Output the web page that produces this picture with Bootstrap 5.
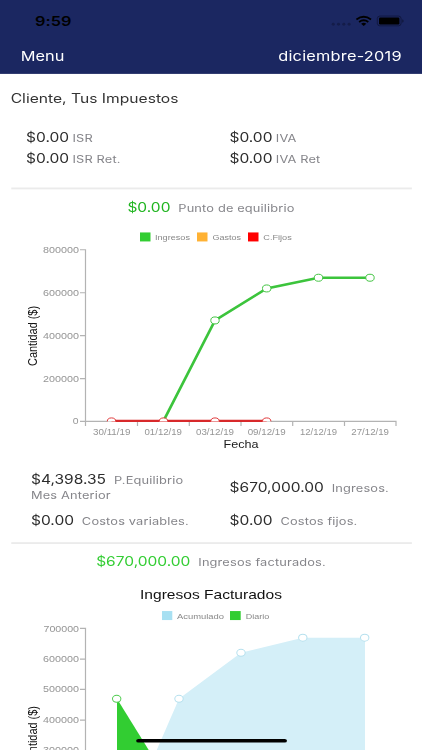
<!DOCTYPE html>
<html lang="es">
<head>
<meta charset="utf-8">
<meta name="viewport" content="width=device-width, initial-scale=1">
<title>Impuestos</title>
<link href="https://cdn.jsdelivr.net/npm/bootstrap@5.3.0/dist/css/bootstrap.min.css" rel="stylesheet">
<style>
html, body { width: 422px; height: 750px; overflow: hidden; background: #fff; }
/* 375x812 phone layout fitted to the window */
.phone { width: 375px; height: 812px; transform-origin: 0 0; transform: scale(1.12533, .92365); font-family: Inter, "Liberation Sans", sans-serif; color: #333; overflow: hidden; }
.topbar { background: #1b2761; height: 80px; }
.statusbar { height: 44px; padding: 2px 16.5px 0 31px; color: #000; }
.clock { font-size: 14.5px; font-weight: 600; letter-spacing: .1px; }
.navline { height: 32px; padding: 1px 18px 0 18.5px; color: #fff; font-size: 14.5px; }
.month { letter-spacing: .2px; }
.headline { height: 52px; padding-left: 9.5px; font-size: 13.9px; }
.taxes { padding: 4px 9px 0 23.2px; height: 71.2px; }
.taxes .line { height: 23.2px; }
.taxes .caption { margin-left: 3px; }
.amount { font-size: 13.8px; color: #2c2c2c; line-height: 15.5px; }
.caption { font-size: 11.4px; letter-spacing: .13px; color: #85858a; line-height: 15.5px; margin-left: 7px; }
.green { color: #1fb41f; }
.lime { color: #32cd32; }
.rule { height: 2px; margin: 0 9.5px; background: #ebebeb; }
.stats { padding: 15px 9px 0 27.5px; height: 89.6px; }
.stats .r1 { height: 31px; }
.stats .r2 { height: 23px; margin-top: 7px; }
.colA { width: 180.7px; }
.stats .colA { width: 176.5px; }
.stats .below { margin-left: 0; }
.stats .income { padding-bottom: 3px; }
.sumline { height: 38.2px; padding-bottom: 2px; }
svg { display: block; }
.plot { width: 375px; }
.plot text { font-family: "Liberation Sans", Arial, sans-serif; }
.tick { font-size: 8.7px; fill: #959595; }
.leg { font-size: 7.9px; fill: #888; }
.homebar { position: absolute; left: 121px; top: 799.6px; width: 133.5px; height: 4.8px; background: #000; border-radius: 3px; }
</style>
<script src="https://cdn.jsdelivr.net/npm/bootstrap@5.3.0/dist/js/bootstrap.bundle.min.js"></script>
</head>
<body>
<div class="phone position-relative">
  <header class="topbar">
    <div class="statusbar d-flex align-items-center justify-content-between">
      <span class="clock">9:59</span>
      <svg width="66" height="14" viewBox="0 0 74.3 13" preserveAspectRatio="none">
        <g fill="#141c49"><circle cx="3.5" cy="9.5" r="1.5"/><circle cx="8.8" cy="9.5" r="1.5"/><circle cx="14.1" cy="9.5" r="1.5"/><circle cx="19.4" cy="9.5" r="1.5"/></g>
        <g fill="none" stroke="#000" stroke-width="1.8"><path d="M26.7 4.7Q34 -.7 41.3 4.7"/><path d="M29.4 7.2Q34 3.8 38.6 7.2"/></g>
        <path d="M31.4 9Q34 7.2 36.6 9L34 11.2Z"/>
        <rect x="47.6" y="1.3" width="23.8" height="9.8" rx="2.6" fill="none" stroke="#11183d" stroke-width=".9"/>
        <rect x="49.3" y="2.7" width="20.4" height="7" rx="1.2"/>
        <path d="M72.5 4.4Q74 5 74 6.2T72.5 8Z" fill="#11183d"/>
      </svg>
    </div>
    <nav class="navline d-flex align-items-center justify-content-between"><span>Menu</span><span class="month">diciembre-2019</span></nav>
  </header>

  <div class="headline d-flex align-items-center">Cliente, Tus Impuestos</div>
  <section class="taxes">
    <div class="line d-flex align-items-center"><div class="colA"><span class="amount">$0.00</span><span class="caption">ISR</span></div><div><span class="amount">$0.00</span><span class="caption">IVA</span></div></div>
    <div class="line d-flex align-items-center"><div class="colA"><span class="amount">$0.00</span><span class="caption">ISR Ret.</span></div><div><span class="amount">$0.00</span><span class="caption">IVA Ret</span></div></div>
  </section>
  <div class="rule"></div>
  <div class="sumline d-flex align-items-center justify-content-center"><div><span class="amount green">$0.00</span><span class="caption">Punto de equilibrio</span></div></div>

  <svg class="plot" height="254.4" viewBox="0 225 422 235" preserveAspectRatio="none">
    <rect x="140" y="233" width="10.5" height="9" fill="#32cd32"/><text class="leg" x="155" y="240.6" textLength="35" lengthAdjust="spacingAndGlyphs">Ingresos</text>
    <rect x="197" y="233" width="10.5" height="9" fill="#ffb234"/><text class="leg" x="212.5" y="240.6" textLength="28.5" lengthAdjust="spacingAndGlyphs">Gastos</text>
    <rect x="248" y="233" width="10.5" height="9" fill="#f00"/><text class="leg" x="263.3" y="240.6" textLength="28.5" lengthAdjust="spacingAndGlyphs">C.Fijos</text>
    <path d="M80 250.3H85.5V422M80 293.3H85.5M80 336.2H85.5M80 379.2H85.5M80 422H396V426.5M85.5 422V426.5M137.5 422V426.5M189.3 422V426.5M241 422V426.5M292.7 422V426.5M344.5 422V426.5" fill="none" stroke="#b3b3b3" stroke-width="1.2"/>
    <g class="tick">
      <text x="43" y="253.3" textLength="36" lengthAdjust="spacingAndGlyphs">800000</text>
      <text x="43" y="296.3" textLength="36" lengthAdjust="spacingAndGlyphs">600000</text>
      <text x="43" y="339.2" textLength="36" lengthAdjust="spacingAndGlyphs">400000</text>
      <text x="43" y="382.2" textLength="36" lengthAdjust="spacingAndGlyphs">200000</text>
      <text x="72.8" y="425" textLength="5.8" lengthAdjust="spacingAndGlyphs">0</text>
      <text x="93" y="435.4" textLength="37.5" lengthAdjust="spacingAndGlyphs">30/11/19</text>
      <text x="144.5" y="435.4" textLength="37.5" lengthAdjust="spacingAndGlyphs">01/12/19</text>
      <text x="196" y="435.4" textLength="38" lengthAdjust="spacingAndGlyphs">03/12/19</text>
      <text x="247.7" y="435.4" textLength="38" lengthAdjust="spacingAndGlyphs">09/12/19</text>
      <text x="300" y="435.4" textLength="37" lengthAdjust="spacingAndGlyphs">12/12/19</text>
      <text x="351.3" y="435.4" textLength="37.7" lengthAdjust="spacingAndGlyphs">27/12/19</text>
    </g>
    <text transform="translate(37 366.5) rotate(-90)" font-size="12" fill="#111" textLength="60" lengthAdjust="spacingAndGlyphs">Cantidad ($)</text>
    <text x="223.5" y="449" font-size="10.3" fill="#1a1a1a" textLength="35" lengthAdjust="spacingAndGlyphs">Fecha</text>
    <path d="M163.5 421.5L215 321L266.7 289L318.5 278.3H370" fill="none" stroke="#3cc43c" stroke-width="2.7"/>
    <path d="M111.5 421.4H266.7" stroke="#d8292b" stroke-width="2.2"/>
    <g fill="#fff" stroke="#43c443"><ellipse cx="215" cy="321" rx="4.2" ry="3.5"/><ellipse cx="266.7" cy="289" rx="4.2" ry="3.5"/><ellipse cx="318.5" cy="278.3" rx="4.2" ry="3.5"/><ellipse cx="370" cy="278.3" rx="4.2" ry="3.5"/></g>
    <path fill="#fff" stroke="#e0393b" d="M107.3 422A4.2 3.5 0 0 1 115.7 422M159.3 422A4.2 3.5 0 0 1 167.7 422M210.8 422A4.2 3.5 0 0 1 219.2 422M262.5 422A4.2 3.5 0 0 1 270.9 422"/>
  </svg>

  <section class="stats">
    <div class="r1 d-flex align-items-center">
      <div class="colA lh-1"><div class="d-flex align-items-baseline"><span class="amount">$4,398.35</span><span class="caption">P.Equilibrio</span></div><div class="caption below">Mes Anterior</div></div>
      <div class="income"><span class="amount">$670,000.00</span><span class="caption">Ingresos.</span></div>
    </div>
    <div class="r2 d-flex align-items-center">
      <div class="colA"><span class="amount">$0.00</span><span class="caption">Costos variables.</span></div>
      <div><span class="amount">$0.00</span><span class="caption">Costos fijos.</span></div>
    </div>
  </section>
  <div class="rule"></div>
  <div class="sumline d-flex align-items-center justify-content-center"><div><span class="amount lime">$670,000.00</span><span class="caption">Ingresos facturados.</span></div></div>

  <svg class="plot" height="184.1" viewBox="0 580 422 170" preserveAspectRatio="none">
    <text x="140" y="599.3" font-size="12.8" fill="#111" textLength="142" lengthAdjust="spacingAndGlyphs">Ingresos Facturados</text>
    <rect x="162" y="611" width="10.3" height="9" fill="#a8e0f2"/><text class="leg" x="177" y="618.6" textLength="47" lengthAdjust="spacingAndGlyphs">Acumulado</text>
    <rect x="230" y="611" width="10.7" height="9" fill="#32cd32"/><text class="leg" x="245.7" y="618.6" textLength="23.5" lengthAdjust="spacingAndGlyphs">Diario</text>
    <path d="M80 628.3H85.5V752M80 659H85.5M80 689.3H85.5M80 720H85.5" fill="none" stroke="#b3b3b3" stroke-width="1.2"/>
    <g class="tick">
      <text x="43.5" y="631.5" textLength="35.5" lengthAdjust="spacingAndGlyphs">700000</text>
      <text x="43" y="662" textLength="36" lengthAdjust="spacingAndGlyphs">600000</text>
      <text x="43" y="692.4" textLength="36" lengthAdjust="spacingAndGlyphs">500000</text>
      <text x="43" y="723" textLength="36" lengthAdjust="spacingAndGlyphs">400000</text>
      <text x="43" y="753.3" textLength="36" lengthAdjust="spacingAndGlyphs">300000</text>
    </g>
    <text transform="translate(37 766) rotate(-90)" font-size="12" fill="#111" textLength="60" lengthAdjust="spacingAndGlyphs">Cantidad ($)</text>
    <path d="M156.7 750L179 698.7L241 652.7L302.8 637.6H365V752H156Z" fill="#d4eff8"/>
    <path d="M117 698.7L150 752H117Z" fill="#32cd32"/>
    <g fill="#fff" stroke="#b5e0ee"><ellipse cx="179" cy="698.7" rx="4.2" ry="3.5"/><ellipse cx="241" cy="652.7" rx="4.2" ry="3.5"/><ellipse cx="302.8" cy="637.6" rx="4.2" ry="3.5"/><ellipse cx="364.7" cy="637.6" rx="4.2" ry="3.5"/><ellipse cx="116.7" cy="698.7" rx="4.2" ry="3.5" stroke="#50cc50"/></g>
  </svg>
  <div class="homebar"></div>
</div>
</body>
</html>
